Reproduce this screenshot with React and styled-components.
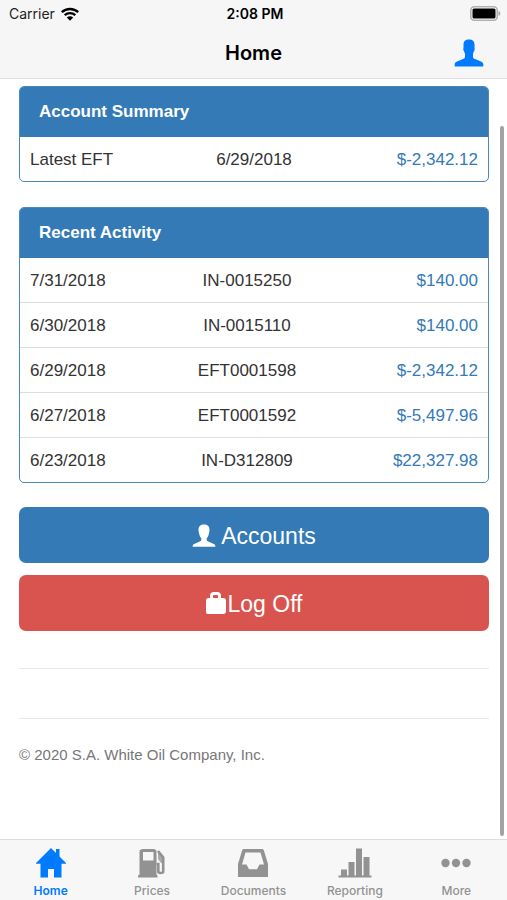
import React from "react";
import styled, { createGlobalStyle } from "styled-components";

const summary = [{ label: "Latest EFT", ref: "6/29/2018", amount: "$-2,342.12" }];

const activity = [
  { label: "7/31/2018", ref: "IN-0015250", amount: "$140.00" },
  { label: "6/30/2018", ref: "IN-0015110", amount: "$140.00" },
  { label: "6/29/2018", ref: "EFT0001598", amount: "$-2,342.12" },
  { label: "6/27/2018", ref: "EFT0001592", amount: "$-5,497.96" },
  { label: "6/23/2018", ref: "IN-D312809", amount: "$22,327.98" },
];

const ProfileIcon = () => (
  <svg width="30" height="28" viewBox="0 0 30 28" fill="currentColor" aria-hidden="true">
    <path d="M15 .5c-3.500 0-5.500 1.800-5.500 5.200V9c-.5 1.200 0 2.700.7 3.500.2 1 .5 1.700.8 2.300v3c0 1.300-.7 1.800-2 2.300l-6 2.400C1.200 23.300.7 24.300.7 25.500V27.500h28.600v-2c0-1.200-.5-2.200-2.300-3l-6-2.400c-1.300-.5-2-1-2-2.300v-3c.3-.6.6-1.300.8-2.300.7-.8 1.200-2.300.7-3.500V5.700C20.500 2.300 18.500.5 15 .5z" />
  </svg>
);

const UserIcon = () => (
  <svg width="24" height="24" viewBox="0 0 24 24" fill="currentColor" aria-hidden="true">
    <path d="M12 .5C8.500.5 6.500 2.500 6.500 5.500c0 1.500.2 2.500.5 3.500.4 2.500 1 4 2.300 5.200v1.600c0 .7-.3 1.200-1 1.500l-5.600 2.400C1.200 20.400.7 21 .7 22v.8h22.600V22c0-1-.5-1.600-2-2.300l-5.600-2.400c-.7-.3-1-.8-1-1.500v-1.600C16 13 16.600 11.500 17 9c.3-1 .5-2 .5-3.500 0-3-2-5-5.500-5z" />
  </svg>
);

const BagIcon = () => (
  <svg width="22" height="24" viewBox="0 0 22 24" fill="currentColor" aria-hidden="true">
    <path
      fillRule="evenodd"
      d="M5 6V3.500C5 1.500 6.500 0 8.500 0h4C14.500 0 16 1.500 16 3.500V6h2.500C20 6 21 7 21 8.500v11c0 1.500-1 2.500-2.500 2.500h-16C1.500 22 1 21 1 19.500v-11C1 7 2 6 3.500 6zM8 6h5V4c0-.6-.4-1-1-1H9c-.6 0-1 .4-1 1z"
    />
  </svg>
);

const WifiIcon = () => (
  <svg width="18" height="14" viewBox="0 0 18 14" aria-hidden="true">
    <g fill="none" stroke="#000" strokeWidth="2.300">
      <path d="M.8 5.200C5.300.9 12.700.9 17.200 5.200" />
      <path d="M3.700 8.200c3-2.800 7.600-2.800 10.600 0" />
    </g>
    <path d="M5.800 10.500c1.800-1.600 4.600-1.600 6.400 0L9 13.700z" />
  </svg>
);

const BatteryIcon = () => (
  <svg width="31" height="15" viewBox="0 0 31 15" aria-hidden="true">
    <rect x=".8" y=".8" width="26.400" height="13.400" rx="3.500" fill="#fff" stroke="#b0b0b0" strokeWidth="1.600" />
    <rect x="2.500" y="2.500" width="23" height="10" rx="1.500" />
    <path d="M28.500 5c2.400.8 2.400 4.200 0 5z" fill="#a5a5a5" />
  </svg>
);

const HomeIcon = () => (
  <svg width="32" height="30" viewBox="0 0 32 30" fill="currentColor" aria-hidden="true">
    <path d="M16 0l5 5V1h3.500v7.500L31 15v.8h-4.500V29.500H19V21h-6v8.500H5.500V15.800H1V15z" />
  </svg>
);

const PumpIcon = () => (
  <svg width="32" height="30" viewBox="0 0 32 30" aria-hidden="true">
    <path
      fill="currentColor"
      fillRule="evenodd"
      d="M7 1h10.500C19.300 1 20.500 2 20.500 3.500V26.500l1 1v2H2v-2l1.500-1v-23C3.500 2 5 1 7 1zM7 4v8.500h10.500V4z"
    />
    <path
      fill="none"
      stroke="currentColor"
      strokeWidth="2.600"
      d="M20.500 16h1.800v7.500c0 1 .5 1.500 2.300 1.500s2.600-.5 2.600-1.500V9.500L22 3"
    />
    <path fill="currentColor" d="M22 3l6 7v6l-3.500-1.500L22 11z" fillOpacity=".75" />
  </svg>
);

const TrayIcon = () => (
  <svg width="32" height="30" viewBox="0 0 32 30" fill="currentColor" aria-hidden="true">
    <path
      fillRule="evenodd"
      d="M7 1h18c1 0 1.600.5 1.900 1.500L31 16v13H1V16L5.100 2.500C5.400 1.500 6 1 7 1zM8.500 4.500L5 16.500h4.500l2.500 4.800h8l2.500-4.800H27L23.500 4.500z"
    />
  </svg>
);

const ChartIcon = () => (
  <svg width="34" height="30" viewBox="0 0 34 30" fill="currentColor" aria-hidden="true">
    <path d="M.5 27.500h33v2H.5zM3 21.500h6V28H3zM10.500 14h6v14h-6zM18 .5h6V28h-6zM25.500 9h6v19h-6z" />
  </svg>
);

const MoreIcon = () => (
  <svg width="30" height="30" viewBox="0 0 30 30" fill="currentColor" aria-hidden="true">
    <circle cx="4.500" cy="15" r="4.200" />
    <circle cx="15" cy="15" r="4.200" />
    <circle cx="25.500" cy="15" r="4.200" />
  </svg>
);

const tabs = [
  { name: "Home", Icon: HomeIcon, active: true },
  { name: "Prices", Icon: PumpIcon },
  { name: "Documents", Icon: TrayIcon },
  { name: "Reporting", Icon: ChartIcon },
  { name: "More", Icon: MoreIcon },
];

const Panel = ({ title, rows, first, last }) => (
  <Card>
    <CardTitle>{title}</CardTitle>
    <Table aria-label={title}>
      <colgroup>
        <Col $width={first} />
        <Col />
        <Col $width={last} />
      </colgroup>
      <tbody>
        {rows.map((row) => (
          <Row key={row.label}>
            <Cell>{row.label}</Cell>
            <Cell $align="center">{row.ref}</Cell>
            <Cell $align="right">
              <Amount href="#">{row.amount}</Amount>
            </Cell>
          </Row>
        ))}
      </tbody>
    </Table>
  </Card>
);

const App = () => {
  return (
    <>
      <GlobalStyle />
      <Screen>
        <Header>
          <StatusBar>
            <Carrier>
              Carrier <WifiIcon />
            </Carrier>
            <Clock>2:08 PM</Clock>
            <Battery>
              <BatteryIcon />
            </Battery>
          </StatusBar>
          <NavBar>
            <Title>Home</Title>
            <Profile aria-label="Profile">
              <ProfileIcon />
            </Profile>
          </NavBar>
        </Header>
        <Content>
          <Panel title="Account Summary" rows={summary} first="33%" last="33%" />
          <Panel title="Recent Activity" rows={activity} first="31%" last="34%" />
          <Buttons>
            <Button $color="#337ab7" $gap="5px">
              <UserIcon />
              Accounts
            </Button>
            <Button $color="#d9534f">
              <BagIcon />
              Log Off
            </Button>
          </Buttons>
          <Line />
          <Line />
          <Footer>© 2020 S.A. White Oil Company, Inc.</Footer>
          <Scrollbar />
        </Content>
        <TabBar>
          {tabs.map(({ name, Icon, active }) => (
            <Tab key={name} href="#" $active={active}>
              <Icon />
              {name}
            </Tab>
          ))}
        </TabBar>
      </Screen>
    </>
  );
};

export default App;

const GlobalStyle = createGlobalStyle`
  * {
    box-sizing: border-box;
  }
  body {
    margin: 0;
    background: #fff;
    color: #333;
    font-family: "Liberation Sans", Arial, sans-serif;
    font-size: 17px;
  }
`;

const Screen = styled.div`
  display: flex;
  flex-direction: column;
  height: 100vh;
`;
const Header = styled.header`
  background: #f6f6f6;
  border-bottom: 1px solid #e0e0e0;
  color: #000;
  font-family: Inter, sans-serif;
`;
const StatusBar = styled.div`
  display: grid;
  grid-template-columns: 1fr auto 1fr;
  align-items: center;
  height: 27px;
  padding: 0 6px 0 9px;
  font-size: 14px;
`;
const Carrier = styled.span`
  display: flex;
  align-items: center;
  gap: 6px;
  color: #222;
`;
const Clock = styled.span`
  font-weight: 600;
`;
const Battery = styled.span`
  display: flex;
  justify-content: flex-end;
`;
const NavBar = styled.div`
  display: grid;
  grid-template-columns: 1fr auto 1fr;
  align-items: center;
  height: 51px;
  padding: 0 23px;
`;
const Title = styled.h1`
  grid-column: 2;
  margin: 0;
  font-size: 20px;
  font-weight: 600;
`;
const Profile = styled.button`
  display: flex;
  justify-self: end;
  padding: 0;
  border: 0;
  background: none;
  color: #007aff;
`;
const Content = styled.main`
  position: relative;
  flex: 1;
  min-height: 0;
  overflow: hidden;
  padding: 7px 18px 0 19px;
`;
const Card = styled.section`
  border: 1px solid #4a89c0;
  border-radius: 5px;
  overflow: hidden;
  & + & {
    margin-top: 25px;
  }
`;
const CardTitle = styled.h2`
  margin: 0;
  padding: 0 19px;
  background: #337ab7;
  color: #fff;
  font-size: 17px;
  font-weight: 700;
  line-height: 50px;
`;
const Table = styled.table`
  width: 100%;
  table-layout: fixed;
  border-collapse: collapse;
`;
const Col = styled.col`
  width: ${(p) => p.$width || "auto"};
`;
const Row = styled.tr`
  & + & {
    border-top: 1px solid #ddd;
  }
`;
const Cell = styled.td`
  padding: 2px 10px 0;
  line-height: 42px;
  text-align: ${(p) => p.$align || "left"};
`;
const Amount = styled.a`
  color: #337ab7;
  text-decoration: none;
`;
const Buttons = styled.div`
  display: flex;
  flex-direction: column;
  gap: 12px;
  margin-top: 24px;
`;
const Button = styled.button`
  display: flex;
  align-items: center;
  justify-content: center;
  gap: ${(p) => p.$gap || "0"};
  height: 56px;
  padding: 2px 0 0;
  border: 0;
  border-radius: 7px;
  background: ${(p) => p.$color};
  color: #fff;
  font-family: inherit;
  font-size: 23px;
`;
const Line = styled.hr`
  height: 1px;
  margin: 37px 0 0;
  border: 0;
  background: #e8e8e8;
  & + & {
    margin-top: 49px;
  }
`;
const Footer = styled.footer`
  margin-top: 26px;
  color: #777;
  font-size: 15px;
  line-height: 20px;
`;
const Scrollbar = styled.div`
  position: absolute;
  top: 47px;
  right: 3px;
  bottom: 3px;
  width: 4px;
  border-radius: 2px;
  background: #a3a3a3;
`;
const TabBar = styled.nav`
  display: grid;
  grid-template-columns: repeat(5, 1fr);
  height: 61px;
  border-top: 1px solid #dcdcdc;
  background: #f7f7f7;
`;
const Tab = styled.a`
  display: flex;
  flex-direction: column;
  align-items: center;
  gap: 5px;
  padding-top: 8px;
  color: ${(p) => (p.$active ? "#007aff" : "#929292")};
  font-family: Inter, sans-serif;
  font-size: 12px;
  font-weight: ${(p) => (p.$active ? 600 : 500)};
  line-height: 16px;
  text-decoration: none;
`;
